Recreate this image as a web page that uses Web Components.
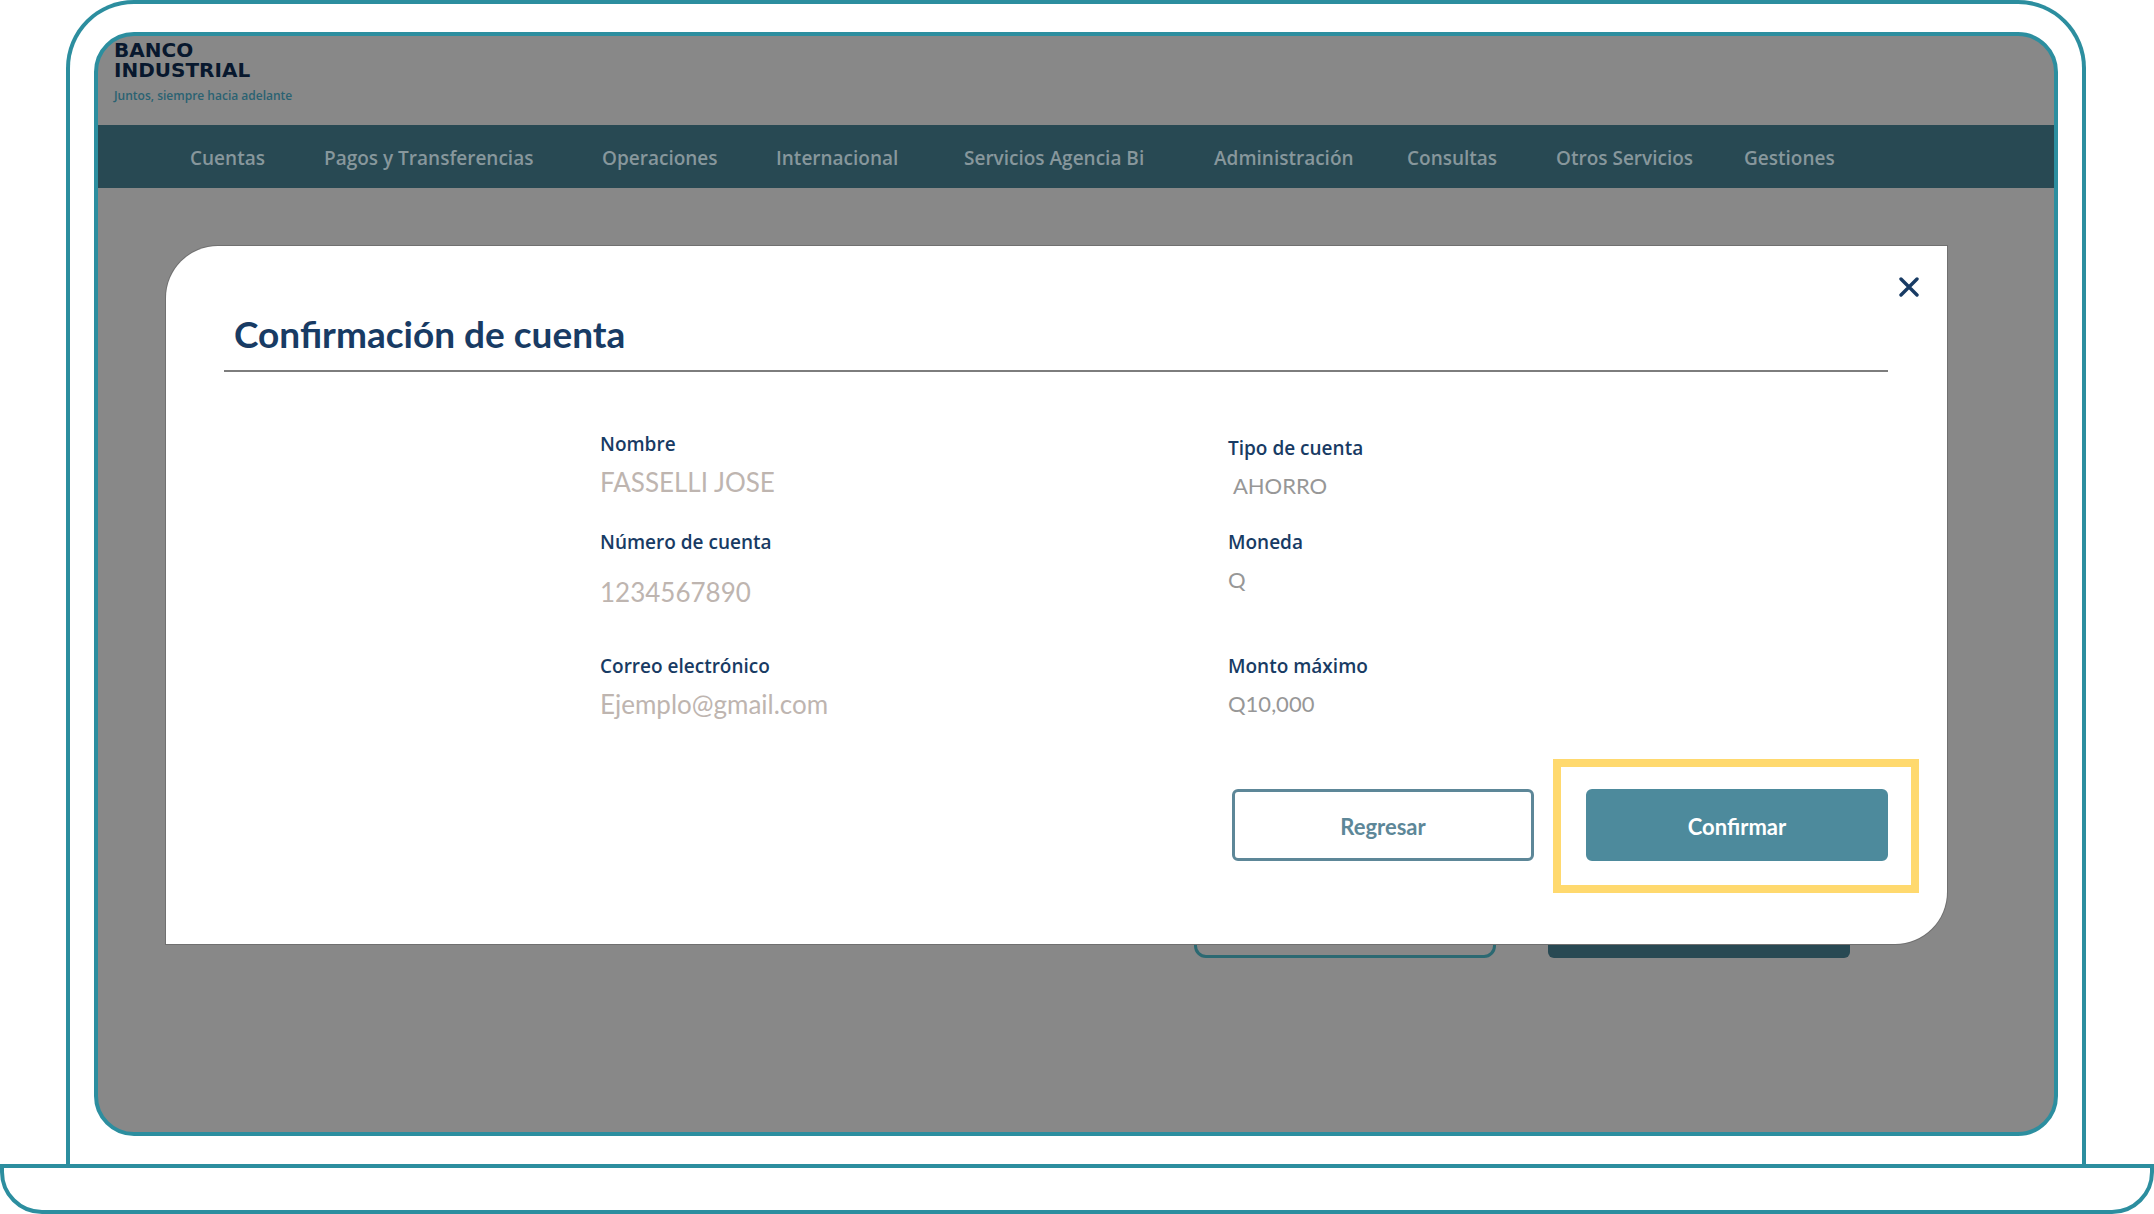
<!DOCTYPE html>
<html lang="es">
<head>
<meta charset="utf-8">
<meta name="viewport" content="width=device-width, initial-scale=1">
<title>Confirmación de cuenta</title>
<style>
  :root { --frame: #2c8e9f; --shade: #888888; --bar: #284953; --navy: #183b64; --teal: #4d8a9c; --highlight: #ffd96e; }
  body { margin: 0; background: #fff; font-family: Lato, "Liberation Sans", sans-serif; }
</style>
</head>
<body>
<laptop-frame>
  <bank-header></bank-header>
  <bank-nav></bank-nav>
  <page-actions></page-actions>
  <confirm-dialog heading="Confirmación de cuenta">
    <data-field label="Nombre" size="large">FASSELLI JOSE</data-field>
    <data-field label="Tipo de cuenta" lowered>&nbsp;AHORRO</data-field>
    <data-field label="Número de cuenta" size="large" spaced>1234567890</data-field>
    <data-field label="Moneda">Q</data-field>
    <data-field label="Correo electrónico" size="large">Ejemplo@gmail.com</data-field>
    <data-field label="Monto máximo">Q10,000</data-field>
    <bank-button slot="actions" variant="outline">Regresar</bank-button>
    <bank-button slot="actions" highlighted>Confirmar</bank-button>
  </confirm-dialog>
</laptop-frame>
<script>
const define = (name, html, setup) => {
  const template = document.createElement('template');
  template.innerHTML = html;
  customElements.define(name, class extends HTMLElement {
    connectedCallback() {
      if (this.shadowRoot) return;
      const root = this.attachShadow({ mode: 'open' });
      root.append(template.content.cloneNode(true));
      if (setup) setup(this, root);
    }
  });
};

define('laptop-frame', `
<style>
  :host { display: flex; flex-direction: column; min-height: 100vh; }
  * { box-sizing: border-box; }
  .lid { flex: 1; display: flex; margin: 0 68px 0 66px; padding: 28px 24px; border: 4px solid var(--frame); border-bottom: 0; border-radius: 68px 68px 0 0; }
  .screen { flex: 1; position: relative; overflow: hidden; border: 4px solid var(--frame); border-radius: 40px; background: var(--shade); }
  .base { height: 50px; border: 4px solid var(--frame); border-radius: 0 0 42px 42px; }
</style>
<div class="lid"><div class="screen"><slot></slot></div></div>
<div class="base"></div>`);

define('bank-header', `
<style>
  :host { display: block; box-sizing: border-box; height: 89px; padding: 4px 16px; color: #08182e; }
  .name { font: 700 20px/20px "DejaVu Sans", sans-serif; }
  .tagline { margin-top: 6px; font: 600 12px/20px "Open Sans", sans-serif; color: #2a6272; }
</style>
<div class="name">BANCO<br>INDUSTRIAL</div>
<div class="tagline">Juntos, siempre hacia adelante</div>`);

define('bank-nav', `
<style>
  :host { display: block; background: var(--bar); }
  nav { box-sizing: border-box; display: grid; grid-template-columns: 134fr 278fr 174fr 188fr 250fr 193fr 149fr 188fr 310fr; align-items: center; height: 63px; padding: 2px 0 0 92px; }
  a { color: #87979c; font: 600 19px/24px "Open Sans", sans-serif; text-decoration: none; white-space: nowrap; }
</style>
<nav>
  <a href="#">Cuentas</a><a href="#">Pagos y Transferencias</a><a href="#">Operaciones</a>
  <a href="#">Internacional</a><a href="#">Servicios Agencia Bi</a><a href="#">Administración</a>
  <a href="#">Consultas</a><a href="#">Otros Servicios</a><a href="#">Gestiones</a>
</nav>`);

define('page-actions', `
<style>
  :host { display: flex; justify-content: flex-end; gap: 52px; padding: 698px 204px 0 0; }
  button { box-sizing: border-box; width: 302px; height: 72px; padding: 0; border: 3px solid #2b6972; border-radius: 12px; background: none; }
  .solid { border: 0; border-radius: 6px; background: var(--bar); }
</style>
<button type="button" aria-label="Cancelar"></button>
<button type="button" class="solid" aria-label="Continuar"></button>`);

define('confirm-dialog', `
<style>
  :host { display: block; position: absolute; top: 210px; left: 68px; right: 107px; box-sizing: border-box; padding: 64px 59px 83px 58px; border-radius: 52px 0 52px 0; background: #fff; box-shadow: 0 0 0 1px #707070; }
  h1 { margin: 0; padding: 0 10px 12px; border-bottom: 2px solid #7d7d7d; color: var(--navy); font: 700 37px/48px Lato, sans-serif; }
  .close { position: absolute; top: 23px; right: 20px; padding: 8px; border: 0; background: none; color: var(--navy); line-height: 0; }
  .fields { display: grid; grid-template-columns: 628fr 660fr; grid-template-rows: 98px 124px auto; padding: 60px 0 0 calc(100% * 376 / 1664); }
  .actions { display: flex; justify-content: flex-end; gap: 52px; margin-top: 69px; }
</style>
<section role="dialog" aria-labelledby="title">
  <button class="close" type="button" aria-label="Cerrar">
    <svg width="20" height="20" viewBox="0 0 20 20" fill="none" stroke="currentColor" stroke-width="3.4" stroke-linecap="round"><path d="M2 2 18 18M18 2 2 18"/></svg>
  </button>
  <h1 id="title"></h1>
  <div class="fields"><slot></slot></div>
  <div class="actions"><slot name="actions"></slot></div>
</section>`, (host, root) => { root.querySelector('h1').textContent = host.getAttribute('heading'); });

define('data-field', `
<style>
  :host { display: block; --value: 22px; --tone: #979797; }
  :host([size="large"]) { --value: 26px; --tone: #beb5b0; }
  :host([lowered]) { padding-top: 4px; }
  dl { display: flex; flex-direction: column; gap: 10px; margin: 0; }
  :host([spaced]) dl { gap: 22px; }
  dt { color: var(--navy); font: 650 19px/24px "Open Sans", sans-serif; }
  dd { margin: 0; color: var(--tone); font: 400 var(--value)/32px Lato, sans-serif; }
</style>
<dl><dt></dt><dd><slot></slot></dd></dl>`, (host, root) => { root.querySelector('dt').textContent = host.getAttribute('label'); });

define('bank-button', `
<style>
  :host { display: block; position: relative; }
  button { box-sizing: border-box; width: 302px; height: 72px; padding: 3px 0 0; border: 3px solid var(--teal); border-radius: 6px; background: var(--teal); color: #fff; font: 700 22px/28px Lato, sans-serif; }
  :host([variant="outline"]) button { background: #fff; color: #5d8798; border-color: #5d8798; }
  :host([highlighted])::after { content: ""; position: absolute; inset: -30px -31px -32px -33px; border: 8px solid var(--highlight); pointer-events: none; }
</style>
<button type="button"><slot></slot></button>`);
</script>
</body>
</html>
